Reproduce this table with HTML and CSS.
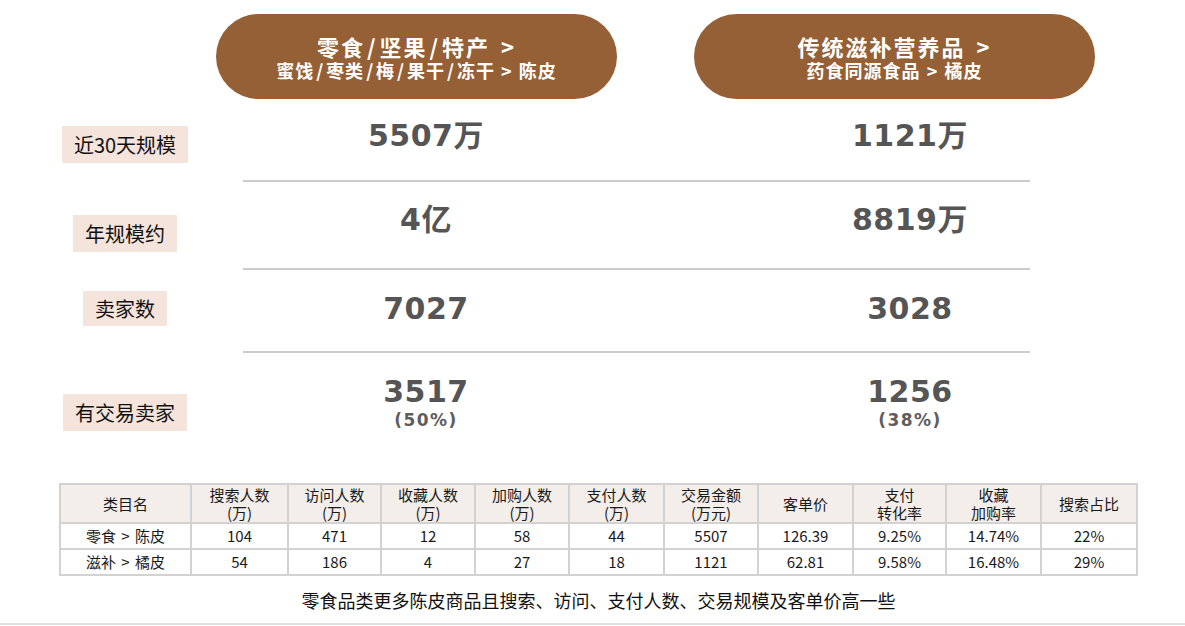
FILE: index.html
```html
<!DOCTYPE html>
<html lang="zh">
<head>
<meta charset="utf-8">
<title>陈皮 vs 橘皮</title>
<link rel="stylesheet" href="styles.css">
</head>
<body>
<div class="page">
  <div class="pills">
    <div class="pill pill-left">
      <div class="pill-main">零食<span class="sl">/</span>坚果<span class="sl">/</span>特产 &gt;</div>
      <div class="pill-sub">蜜饯<span class="sl">/</span>枣类<span class="sl">/</span>梅<span class="sl">/</span>果干<span class="sl">/</span>冻干 &gt; 陈皮</div>
    </div>
    <div class="pill pill-right">
      <div class="pill-main">传统滋补营养品 &gt;</div>
      <div class="pill-sub">药食同源食品 &gt; 橘皮</div>
    </div>
  </div>

  <div class="stats">
    <div class="stat-row r1">
      <div class="label-cell"><span class="label">近30天规模</span></div>
      <div class="vals"><div class="val a">5507万</div><div class="val b">1121万</div></div>
    </div>
    <div class="stat-row r2">
      <div class="label-cell"><span class="label">年规模约</span></div>
      <div class="vals"><div class="val a">4亿</div><div class="val b">8819万</div></div>
    </div>
    <div class="stat-row r3">
      <div class="label-cell"><span class="label">卖家数</span></div>
      <div class="vals"><div class="val a">7027</div><div class="val b">3028</div></div>
    </div>
    <div class="stat-row r4">
      <div class="label-cell"><span class="label">有交易卖家</span></div>
      <div class="vals">
        <div class="val a">3517<span class="pct">(50%)</span></div>
        <div class="val b">1256<span class="pct">(38%)</span></div>
      </div>
    </div>
  </div>

  <table class="data">
    <colgroup>
      <col class="c-name"><col class="c-97"><col class="c-93"><col class="c-94"><col class="c-94"><col class="c-95"><col class="c-94"><col class="c-95"><col class="c-93"><col class="c-95"><col class="c-96">
    </colgroup>
    <thead>
      <tr>
        <th>类目名</th>
        <th>搜索人数<br>(万)</th>
        <th>访问人数<br>(万)</th>
        <th>收藏人数<br>(万)</th>
        <th>加购人数<br>(万)</th>
        <th>支付人数<br>(万)</th>
        <th>交易金额<br>(万元)</th>
        <th>客单价</th>
        <th>支付<br>转化率</th>
        <th>收藏<br>加购率</th>
        <th>搜索占比</th>
      </tr>
    </thead>
    <tbody>
      <tr>
        <td>零食 &gt; 陈皮</td><td>104</td><td>471</td><td>12</td><td>58</td><td>44</td><td>5507</td><td>126.39</td><td>9.25%</td><td>14.74%</td><td>22%</td>
      </tr>
      <tr>
        <td>滋补 &gt; 橘皮</td><td>54</td><td>186</td><td>4</td><td>27</td><td>18</td><td>1121</td><td>62.81</td><td>9.58%</td><td>16.48%</td><td>29%</td>
      </tr>
    </tbody>
  </table>

  <p class="note">零食品类更多陈皮商品且搜索、访问、支付人数、交易规模及客单价高一些</p>
  <div class="rule"></div>
</div>
</body>
</html>
```

FILE: styles.css
```css
html, body {
  margin: 0;
  padding: 0;
  background: #ffffff;
}

body {
  font-family: "Noto Sans CJK SC", "Noto Sans", sans-serif;
  color: #111;
}

.page {
  width: 1185px;
  height: 626px;
  overflow: hidden;
}

/* ---------- pills ---------- */
.pills {
  display: flex;
  gap: 77px;
  padding: 14px 0 0 216px;
  height: 85px;
}

.pill {
  width: 401px;
  height: 85px;
  border-radius: 43px;
  background: #956036;
  color: #ffffff;
  display: flex;
  flex-direction: column;
  align-items: center;
  justify-content: center;
  font-weight: bold;
}

.pill-main {
  font-size: 22px;
  line-height: 26px;
  letter-spacing: 2px;
  word-spacing: 4px;
}

.pill-sub {
  font-size: 18px;
  line-height: 22px;
  letter-spacing: 1px;
  word-spacing: 1px;
}

.sl {
  margin: 0 2px;
}

/* ---------- stats ---------- */
.stat-row {
  display: flex;
}

.r1 { height: 83px; }
.r2 { height: 88px; }
.r3 { height: 83px; }
.r4 { height: 130px; }

.label-cell {
  width: 243px;
  padding-left: 7px;
  box-sizing: border-box;
  display: flex;
  flex-direction: column;
  align-items: center;
}

.r1 .label-cell { padding-top: 27px; }
.r2 .label-cell { padding-top: 33px; }
.r3 .label-cell { padding-top: 21px; }
.r4 .label-cell { padding-top: 41px; }

.label {
  display: block;
  background: #f5e4dc;
  font-size: 20px;
  line-height: 37px;
  padding: 0 12px;
  color: #111;
}

.r3 .label { line-height: 35px; }

.vals {
  width: 787px;
  box-sizing: border-box;
  display: grid;
  grid-template-columns: 366px 1fr 240px;
  align-items: start;
  border-bottom: 2px solid #cccccc;
}

.r4 .vals { border-bottom: none; }

.r1 .vals { padding-top: 19px; }
.r2 .vals { padding-top: 20px; }
.r3 .vals { padding-top: 21px; }
.r4 .vals { padding-top: 21px; }

.val {
  font-family: "DejaVu Sans", "Noto Sans CJK SC", sans-serif;
  font-weight: bold;
  font-size: 30px;
  line-height: 36px;
  color: #555555;
  text-align: center;
  letter-spacing: 0.5px;
}

.val.a { grid-column: 1; }
.val.b { grid-column: 3; }

.pct {
  display: block;
  font-size: 17px;
  line-height: 20px;
  letter-spacing: 1.5px;
  color: #5e5e5e;
}

/* ---------- table ---------- */
.data {
  margin-left: 59px;
  width: 1079px;
  table-layout: fixed;
  border-collapse: collapse;
  font-size: 15px;
  color: #1a1a1a;
}

.c-name { width: 131px; }
.c-97 { width: 97px; }
.c-93 { width: 93px; }
.c-94 { width: 94px; }
.c-95 { width: 95px; }
.c-96 { width: 96px; }

.data th,
.data td {
  border: 2px solid #d2d2d2;
  text-align: center;
  vertical-align: middle;
  padding: 0;
}

.data th {
  background: #f3eeea;
  font-weight: normal;
  line-height: 18px;
  height: 37px;
}

.data td {
  line-height: 20px;
  height: 24px;
  word-spacing: 2px;
}

/* ---------- footer ---------- */
.note {
  margin: 12px 0 0 59px;
  width: 1079px;
  text-align: center;
  font-size: 18px;
  line-height: 24px;
  color: #111;
}

.rule {
  margin-top: 11px;
  height: 2px;
  background: #e2e2e2;
}
```
